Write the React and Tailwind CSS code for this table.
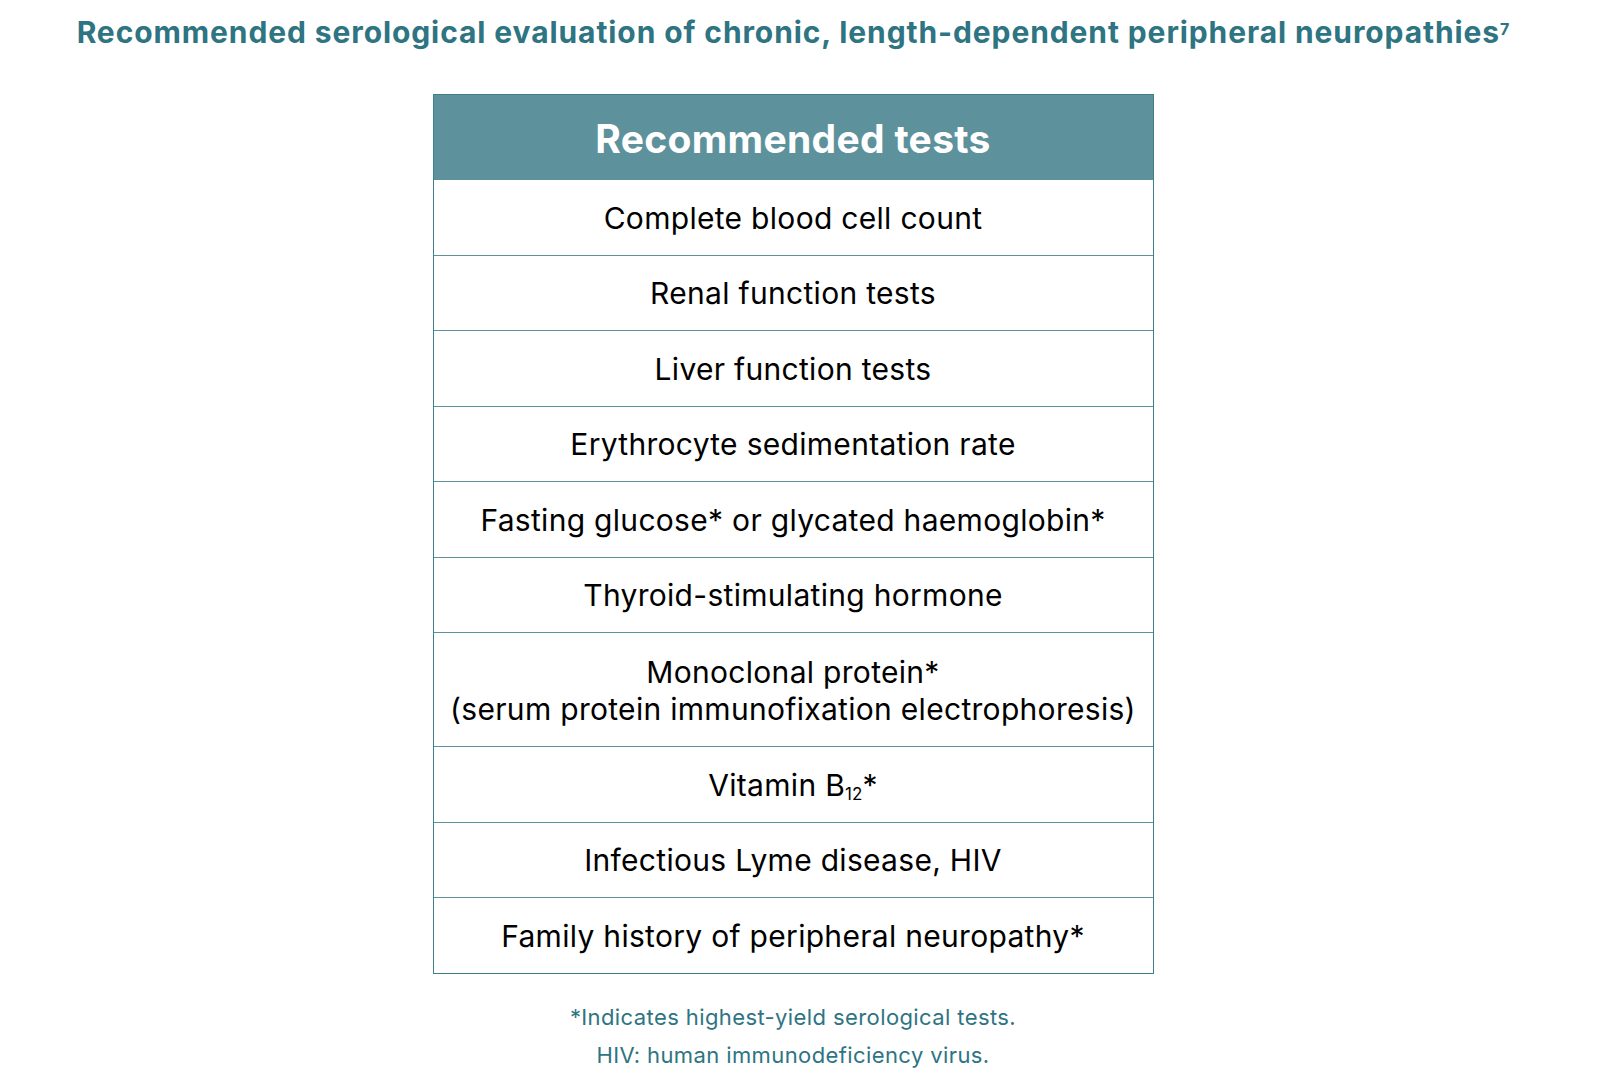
const rows = [
  "Complete blood cell count",
  "Renal function tests",
  "Liver function tests",
  "Erythrocyte sedimentation rate",
  "Fasting glucose* or glycated haemoglobin*",
  "Thyroid-stimulating hormone",
];

const rowsAfter = ["Infectious Lyme disease, HIV", "Family history of peripheral neuropathy*"];

const Row = ({ children, tall }) => (
  <div
    className={`flex flex-col items-center justify-center border-t border-[#5d919c] pt-[2px] text-center ${tall ? "h-[114px]" : "h-[75.5px]"}`}
  >
    {children}
  </div>
);

export default function App() {
  return (
    <div
      className="flex min-h-screen w-full flex-col items-center bg-white pr-[14px]"
      style={{ fontFamily: "Inter, 'Liberation Sans', sans-serif" }}
    >
      <h1 className="mt-[13px] text-[30px] leading-[38px] font-bold tracking-[0.9px] text-[#2e7482]">
        Recommended serological evaluation of chronic, length-dependent peripheral neuropathies
        <sup className="text-[16px] font-bold tracking-normal">7</sup>
      </h1>

      <div className="mt-[43px] w-[721px] border border-[#3f7f8b] text-[30px] tracking-[0.3px] text-black">
        <div className="flex h-[84px] items-center justify-center bg-[#5d919c] pt-[4px] text-[39px] font-bold text-white">
          Recommended tests
        </div>
        {rows.map((r) => (
          <Row key={r}>{r}</Row>
        ))}
        <Row tall>
          <span className="leading-[37px]">Monoclonal protein*</span>
          <span className="leading-[37px]">(serum protein immunofixation electrophoresis)</span>
        </Row>
        <Row>
          <span>
            Vitamin B<sub className="text-[17px] tracking-normal">12</sub>*
          </span>
        </Row>
        {rowsAfter.map((r) => (
          <Row key={r}>{r}</Row>
        ))}
      </div>

      <div className="mt-[24px] text-center text-[22px] leading-[38px] tracking-[0.4px] text-[#2e7482]">
        <p>*Indicates highest-yield serological tests.</p>
        <p>HIV: human immunodeficiency virus.</p>
      </div>
    </div>
  );
}
